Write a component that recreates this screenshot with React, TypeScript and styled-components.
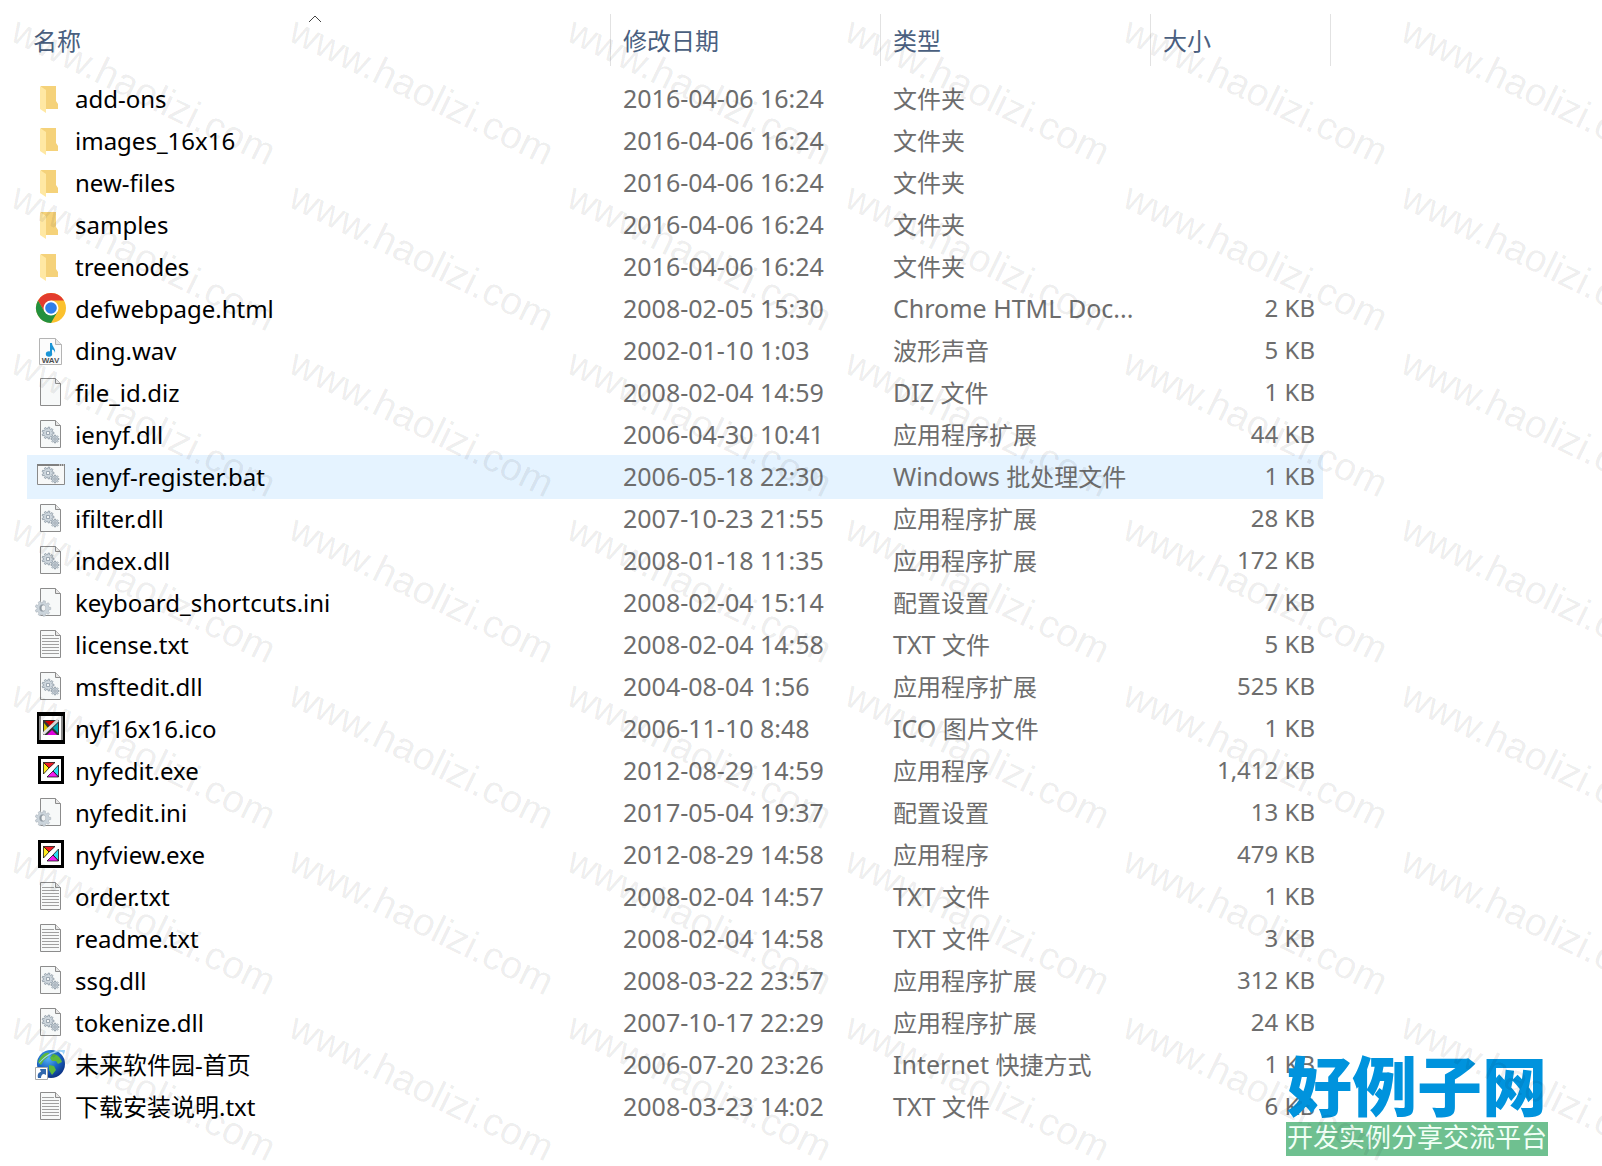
import React from "react";
import styled, { createGlobalStyle } from "styled-components";

const GlobalStyle = createGlobalStyle`
  * { box-sizing: border-box; }
  body {
    margin: 0;
    background: #ffffff;
    font-family: "Noto Sans", "Noto Sans CJK SC", sans-serif;
  }
`;

type IconKind =
  | "folder" | "chrome" | "wav" | "blank" | "dll" | "bat"
  | "ini" | "txt" | "ico" | "exe" | "url";

interface FileEntry {
  icon: IconKind;
  name: string;
  date: string;
  type: string;
  size?: string;
  selected?: boolean;
}

const files: FileEntry[] = [
  { icon: "folder", name: "add-ons", date: "2016-04-06 16:24", type: "文件夹" },
  { icon: "folder", name: "images_16x16", date: "2016-04-06 16:24", type: "文件夹" },
  { icon: "folder", name: "new-files", date: "2016-04-06 16:24", type: "文件夹" },
  { icon: "folder", name: "samples", date: "2016-04-06 16:24", type: "文件夹" },
  { icon: "folder", name: "treenodes", date: "2016-04-06 16:24", type: "文件夹" },
  { icon: "chrome", name: "defwebpage.html", date: "2008-02-05 15:30", type: "Chrome HTML Doc...", size: "2 KB" },
  { icon: "wav", name: "ding.wav", date: "2002-01-10 1:03", type: "波形声音", size: "5 KB" },
  { icon: "blank", name: "file_id.diz", date: "2008-02-04 14:59", type: "DIZ 文件", size: "1 KB" },
  { icon: "dll", name: "ienyf.dll", date: "2006-04-30 10:41", type: "应用程序扩展", size: "44 KB" },
  { icon: "bat", name: "ienyf-register.bat", date: "2006-05-18 22:30", type: "Windows 批处理文件", size: "1 KB", selected: true },
  { icon: "dll", name: "ifilter.dll", date: "2007-10-23 21:55", type: "应用程序扩展", size: "28 KB" },
  { icon: "dll", name: "index.dll", date: "2008-01-18 11:35", type: "应用程序扩展", size: "172 KB" },
  { icon: "ini", name: "keyboard_shortcuts.ini", date: "2008-02-04 15:14", type: "配置设置", size: "7 KB" },
  { icon: "txt", name: "license.txt", date: "2008-02-04 14:58", type: "TXT 文件", size: "5 KB" },
  { icon: "dll", name: "msftedit.dll", date: "2004-08-04 1:56", type: "应用程序扩展", size: "525 KB" },
  { icon: "ico", name: "nyf16x16.ico", date: "2006-11-10 8:48", type: "ICO 图片文件", size: "1 KB" },
  { icon: "exe", name: "nyfedit.exe", date: "2012-08-29 14:59", type: "应用程序", size: "1,412 KB" },
  { icon: "ini", name: "nyfedit.ini", date: "2017-05-04 19:37", type: "配置设置", size: "13 KB" },
  { icon: "exe", name: "nyfview.exe", date: "2012-08-29 14:58", type: "应用程序", size: "479 KB" },
  { icon: "txt", name: "order.txt", date: "2008-02-04 14:57", type: "TXT 文件", size: "1 KB" },
  { icon: "txt", name: "readme.txt", date: "2008-02-04 14:58", type: "TXT 文件", size: "3 KB" },
  { icon: "dll", name: "ssg.dll", date: "2008-03-22 23:57", type: "应用程序扩展", size: "312 KB" },
  { icon: "dll", name: "tokenize.dll", date: "2007-10-17 22:29", type: "应用程序扩展", size: "24 KB" },
  { icon: "url", name: "未来软件园-首页", date: "2006-07-20 23:26", type: "Internet 快捷方式", size: "1 KB" },
  { icon: "txt", name: "下载安装说明.txt", date: "2008-03-23 14:02", type: "TXT 文件", size: "6 KB" },
];

const Page = styled.main`
  position: relative;
  min-height: 100vh;
  padding: 14px 24px 38px 27px;
  overflow: hidden;
`;

const FileTable = styled.table`
  display: block;
  max-width: 1304px;
`;

const TableHead = styled.thead`
  display: block;
  padding-bottom: 12px;
`;

const TableBody = styled.tbody`
  display: block;
  padding-right: 8px;
`;

const columns = "minmax(0, 584px) 270px 270px minmax(0, 1fr)";

const HeadRow = styled.tr`
  display: grid;
  grid-template-columns: ${columns};
  height: 52px;
`;

const HeadCell = styled.th`
  position: relative;
  display: flex;
  padding: 0;
  border-right: 1px solid #e2e2e2;
`;

const SortButton = styled.button<{ $first?: boolean }>`
  flex: 1;
  padding: 2px 0 0 ${(p) => (p.$first ? 6 : 12)}px;
  border: 0;
  background: transparent;
  color: #4a5f80;
  font: inherit;
  font-weight: 400;
  font-size: 24px;
  line-height: 36px;
  text-align: left;
`;

const SortMark = styled.svg`
  position: absolute;
  top: 0;
  left: 50%;
  margin-left: -11px;
`;

const Row = styled.tr<{ $selected?: boolean }>`
  display: grid;
  grid-template-columns: ${columns};
  align-items: center;
  margin: ${(p) => (p.$selected ? "-1px 0" : "0")};
  height: ${(p) => (p.$selected ? 44 : 42)}px;
  background: ${(p) => (p.$selected ? "#e5f3ff" : "transparent")};
`;

const Cell = styled.td<{ $right?: boolean }>`
  padding: 0 ${(p) => (p.$right ? 8 : 0)}px 2px ${(p) => (p.$right ? 0 : 12)}px;
  color: #6d6d6d;
  font-size: ${(p) => (p.$right ? 24 : 25)}px;
  line-height: 36px;
  text-align: ${(p) => (p.$right ? "right" : "left")};
  white-space: nowrap;
`;

const NameCell = styled(Cell)`
  display: flex;
  align-items: center;
  gap: 8px;
  padding: 0 0 0 8px;
  color: #000000;
  font-size: 24px;
`;

const Han = styled.span`
  font-size: 24px;
`;

const IconBox = styled.svg`
  flex: none;
  width: 32px;
  height: 32px;
  overflow: visible;
`;

const Logo = styled.div`
  position: absolute;
  right: 54px;
  bottom: 10px;
  width: 262px;
  text-align: center;
  white-space: nowrap;
`;

const LogoTitle = styled.div`
  color: #0093dd;
  font-family: "Noto Sans CJK SC", sans-serif;
  font-weight: 900;
  font-size: 65px;
  line-height: 78px;
`;

const LogoBanner = styled.div`
  padding-bottom: 6px;
  background: #6fc090;
  color: #f2fff6;
  font-family: "Noto Sans CJK SC", sans-serif;
  font-size: 26px;
  line-height: 28px;
`;

const Watermarks = styled.div`
  position: absolute;
  inset: 0;
  display: grid;
  grid-template-columns: repeat(auto-fill, 278px);
  grid-auto-rows: 166px;
  width: 1700px;
  overflow: hidden;
  pointer-events: none;
`;

const Mark = styled.span`
  padding-left: 25px;
  color: rgba(0, 0, 0, 0.08);
  font-family: "Liberation Sans", Arial, sans-serif;
  font-size: 39px;
  line-height: 38px;
  white-space: nowrap;
  transform: rotate(26deg);
  transform-origin: 0 0;
`;

function Mixed({ text }: { text: string }) {
  const runs = text.split(/([\u4e00-\u9fff]+)/).filter(Boolean);
  return (
    <span>
      {runs.map((run, i) =>
        /[\u4e00-\u9fff]/.test(run) ? <Han key={i}>{run}</Han> : run
      )}
    </span>
  );
}

function gearPath(cx: number, cy: number, outer: number, inner: number, teeth: number) {
  const step = (Math.PI * 2) / teeth;
  const at = (r: number, a: number) =>
    `${(cx + r * Math.cos(a)).toFixed(2)} ${(cy + r * Math.sin(a)).toFixed(2)}`;
  let d = "";
  for (let i = 0; i < teeth; i++) {
    const a = i * step;
    d += `${i ? "L" : "M"}${at(inner, a - step * 0.3)}L${at(outer, a - step * 0.2)}`;
    d += `L${at(outer, a + step * 0.2)}L${at(inner, a + step * 0.3)}`;
  }
  return d + "Z";
}

function Gears({ y }: { y: number }) {
  return (
    <g transform={`translate(0 ${y})`} stroke="#8b98a3" strokeWidth="0.8" fill="#cdd6dd">
      <path d={gearPath(13, 13, 6, 4.4, 9)} />
      <path d="M11.500 11.500H14.500V14.500H11.500Z" fill="#f4f6f7" />
      <path d={gearPath(20, 19, 4, 2.8, 8)} />
      <path d="M19 18H21V20H19Z" fill="#f4f6f7" />
    </g>
  );
}

function Sheet() {
  return (
    <g stroke="#8c8c8c" strokeWidth="1">
      <path d="M5.500 1.500H20.500L25.500 6.500V28.500H5.500Z" fill="#f7f9f9" />
      <path d="M20.500 1.500V6.500H25.500" fill="#e6e6e6" />
    </g>
  );
}

function FileIcon({ kind }: { kind: IconKind }) {
  return (
    <IconBox viewBox="0 0 32 32" aria-hidden="true">
      {kind === "folder" && (
        <>
          <path d="M6 3H21V18L23 21V26H9Z" fill="#f5d27a" />
          <path d="M5 3L11 7V30L5 26Z" fill="#ffe8a3" />
        </>
      )}
      {kind === "chrome" && (
        <>
          <circle cx="16" cy="15" r="15" fill="#fbc12d" />
          <path d="M3 7.500A15 15 0 0 1 29 7.500H16L9.500 18.800Z" fill="#e33b2e" />
          <path d="M16 15L9.500 18.800L3 7.500A15 15 0 0 0 16 30L22.500 18.800Z" fill="#23903f" />
          <circle cx="16" cy="15" r="7.500" fill="#fff" />
          <circle cx="16" cy="15" r="5.800" fill="#2f7de9" />
        </>
      )}
      {kind === "wav" && (
        <>
          <path d="M4.500 3.500H20.500L26.500 9.500V29.500H4.500Z" fill="#fcfcfc" stroke="#b4b4b4" />
          <path d="M20.500 3.500V9.500H26.500" fill="#e9e9e9" stroke="#b4b4b4" />
          <path d="M15 8H17C17 12 21 13 20 18C19.500 15 18 14.500 17 14.500V19H15Z" fill="#1c95d6" />
          <ellipse cx="14" cy="19" rx="3.200" ry="2.700" fill="#1c95d6" />
          <text x="15.500" y="28" fontSize="8" fontWeight="700" textAnchor="middle" fill="#505050" fontFamily="Liberation Sans, sans-serif">WAV</text>
        </>
      )}
      {(kind === "blank" || kind === "dll" || kind === "txt" || kind === "ini") && <Sheet />}
      {kind === "dll" && <Gears y={1} />}
      {kind === "txt" && (
        <path d="M7 6.500H19M7 9.500H24M7 12.500H24M7 15.500H24M7 18.500H24M7 21.500H24M7 24.500H24" stroke="#a0a0a0" fill="none" />
      )}
      {kind === "ini" && (
        <g stroke="#a9b2ba" strokeWidth="0.6">
          <path d={gearPath(8, 21.5, 7.8, 6, 9)} fill="#ccd5dc" />
          <ellipse cx="7.500" cy="21" rx="3" ry="3.600" fill="#8a959e" />
          <ellipse cx="8.500" cy="21" rx="2" ry="2.800" fill="#f3f5f6" stroke="none" />
        </g>
      )}
      {kind === "bat" && (
        <>
          <path d="M2.500 3.500H29.500V23.500H2.500Z" fill="#f7f8f8" stroke="#8a8a8a" />
          <path d="M2 4H30" stroke="#808080" strokeWidth="2" />
          <path d="M24 4H29" stroke="#fff" strokeDasharray="1 1" />
          <Gears y={-1} />
        </>
      )}
      {kind === "ico" && (
        <>
          <path d="M2 -1H30V31H2Z" fill="#000" />
          <path d="M4 3H28V27H4Z" fill="#8a8a8a" />
          <path d="M6 3H26V27H6Z" fill="#fff" />
          <path d="M8 7H24V22H8Z" fill="#333" />
          <path d="M10 8H20L15 13Z" fill="#d40000" />
          <path d="M9 10V20L13 15Z" fill="#d8c800" />
          <path d="M23 10V20L18 15Z" fill="#00a9b5" />
          <path d="M12 22H22L17 17Z" fill="#e000e0" />
          <path d="M8 21L23 7" stroke="#e4e4e4" strokeWidth="3" />
        </>
      )}
      {kind === "exe" && (
        <>
          <path d="M4.500 2.500H27.500V27.500H4.500Z" fill="#fff" stroke="#000" strokeWidth="3" />
          <g stroke="#000" strokeWidth="0.7">
            <path d="M8.500 7.500H20L14 13Z" fill="#ed1c24" />
            <path d="M8.500 7.500V19L14 13Z" fill="#ffec1f" />
            <path d="M23.500 10V22L18 16Z" fill="#29dcf0" />
            <path d="M12 22H23.500L18 16Z" fill="#f01df0" />
          </g>
        </>
      )}
      {kind === "url" && (
        <>
          <defs>
            <radialGradient id="globe" cx="0.4" cy="0.3" r="0.75">
              <stop offset="0" stopColor="#58b4f4" />
              <stop offset="0.5" stopColor="#1a68c8" />
              <stop offset="1" stopColor="#0a2c7c" />
            </radialGradient>
          </defs>
          <circle cx="16" cy="15" r="14" fill="url(#globe)" />
          <path d="M5 9C8 4 12 3 14 4L13 8L9 11L6 16L3 13ZM18 5C22 5 26 9 27 13L23 15L21 12L17 12L15 9ZM14 16L19 17L21 21L17 26L14 21Z" fill="#5cb83c" />
          <path d="M3 16C7 8 18 0 30 1C30 3 29 5 28 6C29 3 26 2 23 3C14 5 8 10 3 16Z" fill="#9fd4f8" />
          <path d="M0.500 18.500H12.500V30.500H0.500Z" fill="#fff" stroke="#a8a8a8" />
          <path d="M3 29C2 25 4 23 6 23L5 20H11V26L9 25C7 25 6 27 6 29Z" fill="#3267ac" />
        </>
      )}
    </IconBox>
  );
}

const headers = ["名称", "修改日期", "类型", "大小"];

export default function App() {
  return (
    <Page>
      <GlobalStyle />
      <FileTable>
        <TableHead>
          <HeadRow>
            {headers.map((label, i) => (
              <HeadCell key={label} scope="col">
                <SortButton type="button" $first={i === 0}>{label}</SortButton>
                {i === 0 && (
                  <SortMark width="14" height="9" viewBox="0 0 14 9" aria-hidden="true">
                    <path d="M1 8L7 2L13 8" fill="none" stroke="#444" />
                  </SortMark>
                )}
              </HeadCell>
            ))}
          </HeadRow>
        </TableHead>
        <TableBody>
          {files.map((f) => (
            <Row key={f.name} $selected={f.selected}>
              <NameCell>
                <FileIcon kind={f.icon} />
                <span>{f.name}</span>
              </NameCell>
              <Cell>{f.date}</Cell>
              <Cell><Mixed text={f.type} /></Cell>
              <Cell $right>{f.size}</Cell>
            </Row>
          ))}
        </TableBody>
      </FileTable>
      <Logo>
        <LogoTitle>好例子网</LogoTitle>
        <LogoBanner>开发实例分享交流平台</LogoBanner>
      </Logo>
      <Watermarks aria-hidden="true">
        {Array.from({ length: 42 }, (_, i) => (
          <Mark key={i}>www.haolizi.com</Mark>
        ))}
      </Watermarks>
    </Page>
  );
}
